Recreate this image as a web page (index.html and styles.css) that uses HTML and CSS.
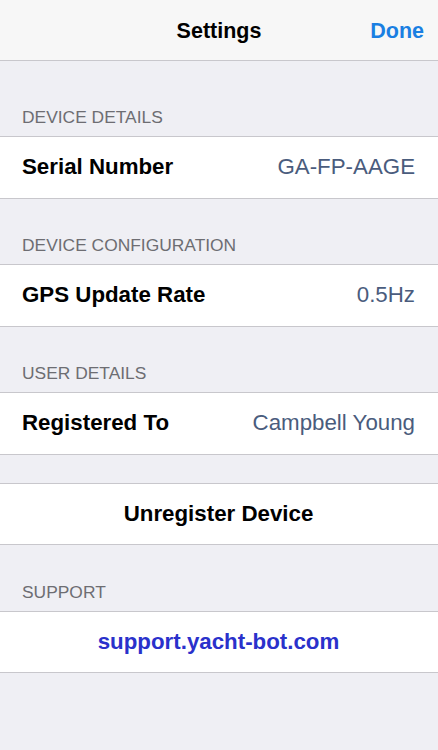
FILE: index.html
```html
<!DOCTYPE html>
<html>
<head>
<meta charset="utf-8">
<link rel="stylesheet" href="styles.css">
</head>
<body>
<div class="screen">
  <header class="nav">
    <span class="nav-title">Settings</span>
    <span class="nav-done">Done</span>
  </header>

  <div class="section-header first">DEVICE DETAILS</div>
  <div class="group">
    <div class="row"><span class="label">Serial Number</span><span class="value">GA-FP-AAGE</span></div>
  </div>

  <div class="section-header">DEVICE CONFIGURATION</div>
  <div class="group">
    <div class="row"><span class="label">GPS Update Rate</span><span class="value">0.5Hz</span></div>
  </div>

  <div class="section-header">USER DETAILS</div>
  <div class="group">
    <div class="row"><span class="label">Registered To</span><span class="value">Campbell Young</span></div>
  </div>

  <div class="spacer"></div>
  <div class="group">
    <div class="row center"><span class="label">Unregister Device</span></div>
  </div>

  <div class="section-header">SUPPORT</div>
  <div class="group">
    <div class="row center"><span class="link">support.yacht-bot.com</span></div>
  </div>
</div>
</body>
</html>
```

FILE: styles.css
```css
html, body {
  margin: 0;
  padding: 0;
  background: #efeff4;
}
body {
  font-family: "Liberation Sans", Arial, sans-serif;
  width: 438px;
  height: 750px;
  overflow: hidden;
}
.screen {
  display: flex;
  flex-direction: column;
  min-height: 750px;
  background: #efeff4;
}
.nav {
  position: relative;
  border-bottom: 1px solid #c8c7cc;
  background: #f7f7f7;
  display: flex;
  align-items: center;
  justify-content: center;
  padding: 2px 14px 0;
  box-sizing: border-box;
  height: 61px;
}
.nav-title {
  font-size: 21.5px;
  font-weight: bold;
  color: #000;
}
.nav-done {
  position: absolute;
  right: 14px;
  top: 2px;
  bottom: 0;
  display: flex;
  align-items: center;
  font-size: 21.5px;
  font-weight: bold;
  color: #1a7fe2;
}
.section-header {
  height: 65.5px;
  box-sizing: border-box;
  display: flex;
  align-items: flex-end;
  padding: 0 22px 9px;
  font-size: 17.4px;
  line-height: 20px;
  color: #6d6d72;
}
.section-header.first {
  height: 75px;
}
.spacer {
  height: 28px;
}
.group {
  background: #fff;
  border-top: 1px solid #c8c7cc;
  border-bottom: 1px solid #c8c7cc;
}
.row {
  height: 60.5px;
  display: flex;
  align-items: center;
  justify-content: space-between;
  padding: 0 23px 0 22px;
  font-size: 22.3px;
}
.row.center {
  justify-content: center;
}
.label {
  font-weight: bold;
  color: #000;
}
.value {
  color: #4a5c7d;
}
.link {
  font-weight: bold;
  color: #2a31cb;
}
```
